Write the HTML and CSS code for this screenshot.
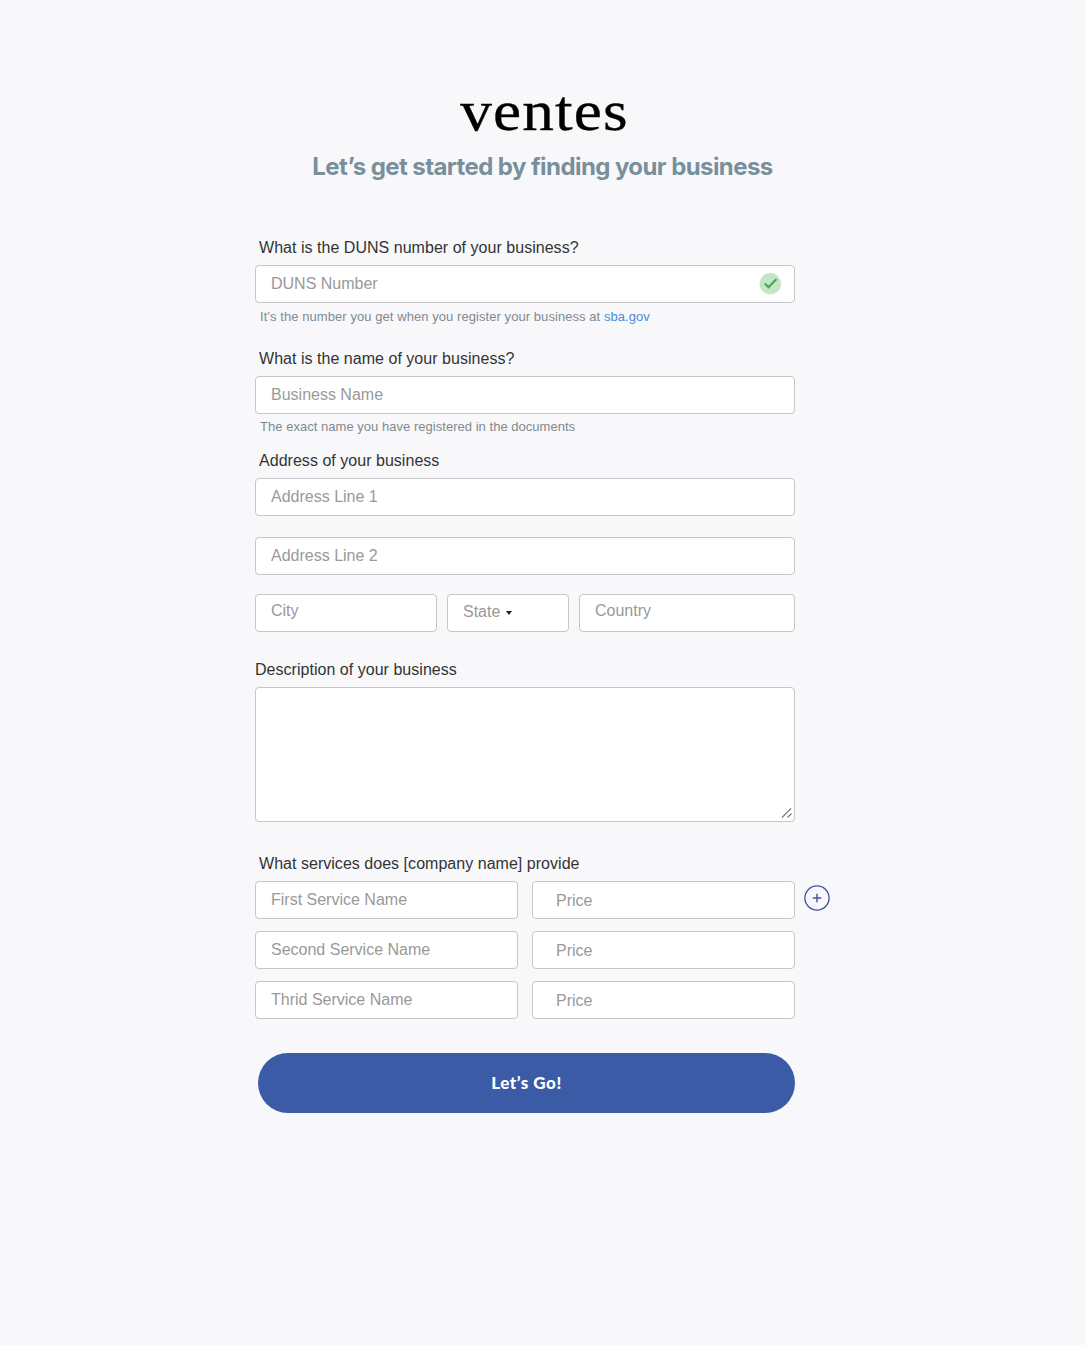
FILE: index.html
```html
<!DOCTYPE html>
<html lang="en">
<head>
<meta charset="utf-8">
<title>ventes</title>
<link rel="stylesheet" href="styles.css">
</head>
<body>
<header class="header">
  <div class="logo">ventes</div>
  <h1 class="title">Let’s get started by finding your business</h1>
</header>
<form class="form">
  <section class="group group-duns">
    <label class="label" for="duns">What is the DUNS number of your business?</label>
    <div class="field">
      <input class="input" id="duns" placeholder="DUNS Number">
      <svg class="check" width="22" height="22" viewBox="0 0 22 22"><circle cx="11.3" cy="10.7" r="10.7" fill="#c3e6c6"/><path d="M5.7 10.5l3.8 3.8 8-8.2" fill="none" stroke="#4da257" stroke-width="2.1"/></svg>
    </div>
    <p class="hint hint-duns">It’s the number you get when you register your business at <a class="link" href="#">sba.gov</a></p>
  </section>
  <section class="group group-name">
    <label class="label" for="name">What is the name of your business?</label>
    <input class="input" id="name" placeholder="Business Name">
    <p class="hint hint-close">The exact name you have registered in the documents</p>
  </section>
  <section class="group group-address">
    <label class="label" for="line1">Address of your business</label>
    <input class="input" id="line1" placeholder="Address Line 1">
    <input class="input line2" placeholder="Address Line 2">
    <div class="place-row">
      <input class="input input-raised" placeholder="City">
      <button class="input state" type="button">State<svg class="caret" width="6" height="4" viewBox="0 0 6 4"><path d="M0 0h6L3 4z" fill="#222"/></svg></button>
      <input class="input input-raised" placeholder="Country">
    </div>
  </section>
  <section class="group group-description">
    <label class="label label-flush" for="description">Description of your business</label>
    <div class="field">
      <textarea class="input textarea" id="description"></textarea>
      <svg class="grip" width="12" height="12" viewBox="0 0 12 12"><path d="M1 10.5L10 1.5M6.5 10.5L10.5 6.5" fill="none" stroke="#777" stroke-width="1.1"/></svg>
    </div>
  </section>
  <section class="group group-services">
    <label class="label" for="service1">What services does [company name] provide</label>
    <div class="services">
      <input class="input" id="service1" placeholder="First Service Name">
      <input class="input price" placeholder="Price">
      <input class="input" placeholder="Second Service Name">
      <input class="input price" placeholder="Price">
      <input class="input" placeholder="Thrid Service Name">
      <input class="input price" placeholder="Price">
      <button class="add" type="button" aria-label="Add service"><svg width="26" height="26" viewBox="0 0 26 26" fill="none" stroke="#3f51a3"><circle cx="13" cy="13" r="12.1" stroke-width="1.3"/><path d="M8.8 13h8.4M13 8.8v8.4" stroke-width="1.4"/></svg></button>
    </div>
  </section>
  <button class="submit" type="button">Let’s Go!</button>
</form>
</body>
</html>
```
FILE: styles.css
```css
* { box-sizing: border-box; }
body {
  margin: 0;
  min-height: 1345px;
  background: #f8f8fb;
  font-family: "Liberation Sans", Arial, sans-serif;
  font-size: 16px;
  color: #333;
}
.header {
  display: flex;
  flex-direction: column;
  align-items: center;
  padding-top: 80px;
}
.logo {
  height: 69px;
  margin-left: 4px;
  line-height: 62px;
  font-family: "Liberation Serif", serif;
  font-size: 56px;
  letter-spacing: 1px;
  color: #000;
  transform: scaleX(1.13);
  -webkit-text-stroke: 0.3px #000;
}
.title {
  margin: 0;
  height: 36px;
  line-height: 36px;
  font-family: Inter, sans-serif;
  font-size: 24px;
  font-weight: 700;
  letter-spacing: -0.58px;
  color: #78909c;
  white-space: nowrap;
}
.form {
  width: 540px;
  margin: 52px 0 0 255px;
}
.group { display: flex; flex-direction: column; }
.group-name { margin-top: 23px; }
.group-address { margin-top: 15px; }
.group-description { margin-top: 27px; }
.group-services { margin-top: 31px; }
.label {
  height: 28px;
  padding-left: 4px;
  line-height: 22px;
  letter-spacing: 0.03px;
  white-space: nowrap;
}
.label-flush { padding-left: 0; }
.field { position: relative; display: flex; }
.input {
  display: block;
  width: 100%;
  height: 38px;
  margin: 0;
  padding: 0 15px;
  border: 1px solid #c6c6c8;
  border-radius: 4px;
  background: #fff;
  font: inherit;
  color: #999;
  text-align: left;
  outline: 0;
}
.input::placeholder { color: #999; opacity: 1; }
.check { position: absolute; right: 14px; top: 8px; }
.hint {
  height: 16px;
  margin: 6px 0 0 5px;
  font-size: 13px;
  line-height: 16px;
  letter-spacing: 0.03px;
  color: #82898e;
  white-space: nowrap;
}
.hint-duns { letter-spacing: 0.065px; }
.hint-close { margin-top: 5px; }
.link { color: #4a8bd8; text-decoration: none; }
.line2 { margin-top: 21px; }
.place-row {
  display: grid;
  grid-template-columns: 182px 122px 216px;
  gap: 10px;
  margin-top: 19px;
}
.input-raised { padding-bottom: 4px; }
.state { display: flex; align-items: center; padding-bottom: 2px; }
.caret { margin: 2px 0 0 6px; }
.textarea { height: 135px; resize: none; }
.grip { position: absolute; right: 2px; bottom: 3px; }
.services {
  position: relative;
  display: grid;
  grid-template-columns: 263px 263px;
  gap: 12px 14px;
}
.price { padding: 2px 23px 0; }
.add {
  position: absolute;
  left: 549px;
  top: 4px;
  width: 26px;
  height: 26px;
  padding: 0;
  border: 0;
  background: none;
}
.add svg { display: block; }
.submit {
  display: block;
  width: 537px;
  height: 60px;
  margin: 34px 0 0 3px;
  padding: 0 0 2px;
  border: 0;
  border-radius: 30px;
  background: #3b5ba7;
  color: #fff;
  font-family: Lato, sans-serif;
  font-size: 17px;
  font-weight: 900;
  letter-spacing: 0.55px;
}
```
